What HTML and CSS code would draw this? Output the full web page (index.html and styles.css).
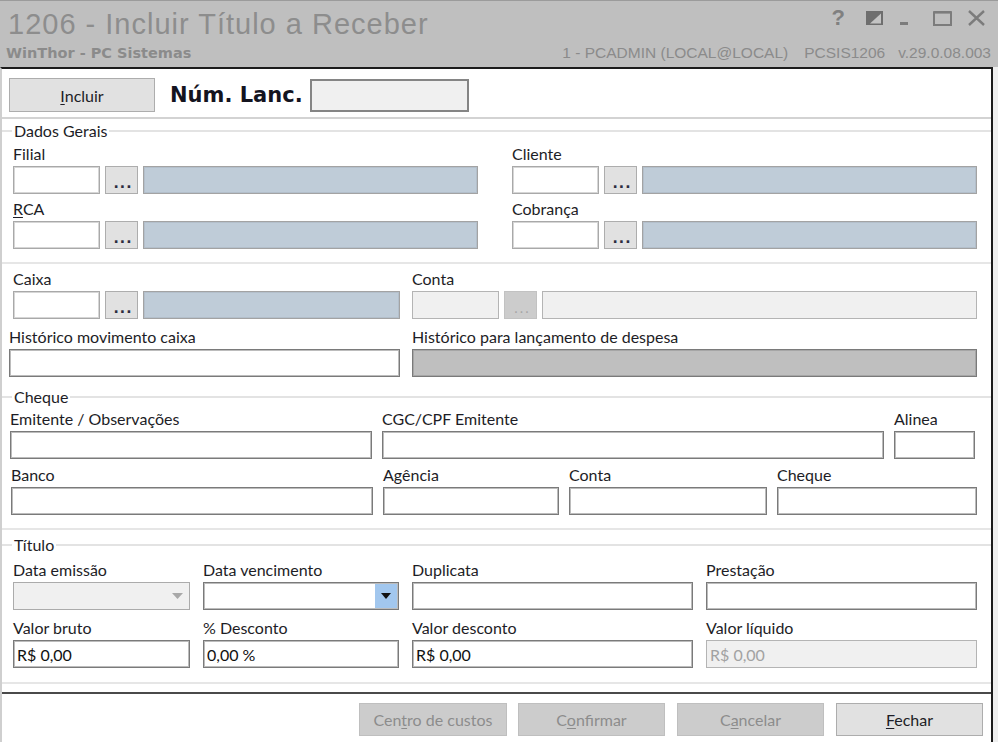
FILE: index.html
```html
<!DOCTYPE html>
<html lang="pt-BR">
<head>
    <meta charset="UTF-8">
    <title>1206 - Incluir Título a Receber</title>
    <link rel="stylesheet" href="styles.css">
</head>
<body>

<div class="window">
    <header class="titlebar">
        <div class="title-row">
            <h1>1206 - Incluir Título a Receber</h1>
            <div class="win-controls">
                <span class="help">?</span>
                <svg class="ctl ctl-theme" width="18" height="15" viewBox="0 0 18 15">
                    <rect x="0" y="0" width="17" height="14" fill="#6e6e6e"/>
                    <polygon points="15,2.5 15,12.5 4,12.5" fill="#c4c4c4"/>
                </svg>
                <svg class="ctl ctl-min" width="10" height="15" viewBox="0 0 10 15">
                    <rect x="1" y="11" width="8" height="3" fill="#7c7c7c"/>
                </svg>
                <svg class="ctl ctl-max" width="19" height="15" viewBox="0 0 19 15">
                    <rect x="1" y="1.2" width="17" height="12.8" fill="none" stroke="#7c7c7c" stroke-width="2"/>
                    <rect x="1" y="0" width="17" height="2.5" fill="#7c7c7c"/>
                </svg>
                <svg class="ctl ctl-close" width="19" height="16" viewBox="0 0 19 16">
                    <path d="M2 1 L17 15 M17 1 L2 15" stroke="#7c7c7c" stroke-width="2.4" fill="none"/>
                </svg>
            </div>
        </div>
        <div class="sub-row">
            <span class="brand">WinThor - PC Sistemas</span>
            <span class="session"><span>1 - PCADMIN (LOCAL@LOCAL)</span><span class="rotina">PCSIS1206</span><span class="versao">v.29.0.08.003</span></span>
        </div>
    </header>

    <div class="frame">
        <div class="toolbar">
            <button class="btn btn-incluir"><u>I</u>ncluir</button>
            <span class="lanc-label">Núm. Lanc.</span>
            <input class="lanc-input" type="text">
        </div>

        <!-- Dados gerais: filial, cliente, RCA, cobrança -->
        <section class="group">
            <div class="group-title title-dados">Dados Gerais</div>
            <div class="grid-dados">
                <div class="field">
                    <label>Filial</label>
                    <div class="lookup">
                        <input class="code" type="text">
                        <button class="dots">...</button>
                        <input class="desc" type="text" readonly>
                    </div>
                </div>
                <div class="field">
                    <label>Cliente</label>
                    <div class="lookup">
                        <input class="code" type="text">
                        <button class="dots">...</button>
                        <input class="desc" type="text" readonly>
                    </div>
                </div>
                <div class="field">
                    <label><u>R</u>CA</label>
                    <div class="lookup">
                        <input class="code" type="text">
                        <button class="dots">...</button>
                        <input class="desc" type="text" readonly>
                    </div>
                </div>
                <div class="field">
                    <label>Cobrança</label>
                    <div class="lookup">
                        <input class="code" type="text">
                        <button class="dots">...</button>
                        <input class="desc" type="text" readonly>
                    </div>
                </div>
            </div>
        </section>

        <!-- Caixa e conta -->
        <section class="group no-sep">
            <div class="grid-caixa">
                <div class="field">
                    <label>Caixa</label>
                    <div class="lookup">
                        <input class="code" type="text">
                        <button class="dots">...</button>
                        <input class="desc" type="text" readonly>
                    </div>
                </div>
                <div class="field">
                    <label>Conta</label>
                    <div class="lookup off">
                        <input class="code" type="text" disabled>
                        <button class="dots" disabled>...</button>
                        <input class="desc" type="text" disabled>
                    </div>
                </div>
                <div class="field wide-left">
                    <label>Histórico movimento caixa</label>
                    <input class="inp" type="text">
                </div>
                <div class="field">
                    <label>Histórico para lançamento de despesa</label>
                    <input class="inp inp-gray" type="text" readonly>
                </div>
            </div>
        </section>

        <!-- Cheque -->
        <section class="group">
            <div class="group-title">Cheque</div>
            <div class="cheque-body">
                <div class="cheque-row1">
                    <div class="field">
                        <label>Emitente / Observações</label>
                        <input class="inp" type="text">
                    </div>
                    <div class="field">
                        <label>CGC/CPF Emitente</label>
                        <input class="inp" type="text">
                    </div>
                    <div class="field">
                        <label>Alinea</label>
                        <input class="inp" type="text">
                    </div>
                </div>
                <div class="cheque-row2">
                    <div class="field">
                        <label>Banco</label>
                        <input class="inp" type="text">
                    </div>
                    <div class="field">
                        <label>Agência</label>
                        <input class="inp" type="text">
                    </div>
                    <div class="field">
                        <label>Conta</label>
                        <input class="inp" type="text">
                    </div>
                    <div class="field">
                        <label>Cheque</label>
                        <input class="inp" type="text">
                    </div>
                </div>
            </div>
        </section>

        <!-- Título -->
        <section class="group">
            <div class="group-title title-titulo">Título</div>
            <div class="grid-titulo">
                <div class="field">
                    <label>Data emissão</label>
                    <div class="combo combo-off">
                        <span class="combo-text"></span>
                        <span class="drop">
                            <svg width="11" height="6" viewBox="0 0 11 6"><polygon points="0,0 11,0 5.5,6" fill="#a8a8a8"/></svg>
                        </span>
                    </div>
                </div>
                <div class="field">
                    <label>Data vencimento</label>
                    <div class="combo">
                        <span class="combo-text"></span>
                        <span class="drop drop-on">
                            <svg width="10" height="6" viewBox="0 0 10 6"><polygon points="0,0 10,0 5,6" fill="#111"/></svg>
                        </span>
                    </div>
                </div>
                <div class="field">
                    <label>Duplicata</label>
                    <input class="inp" type="text">
                </div>
                <div class="field">
                    <label>Prestação</label>
                    <input class="inp" type="text">
                </div>
                <div class="field">
                    <label>Valor bruto</label>
                    <input class="inp" type="text" value="R$ 0,00">
                </div>
                <div class="field">
                    <label>% Desconto</label>
                    <input class="inp" type="text" value="0,00 %">
                </div>
                <div class="field">
                    <label>Valor desconto</label>
                    <input class="inp" type="text" value="R$ 0,00">
                </div>
                <div class="field">
                    <label>Valor líquido</label>
                    <input class="inp inp-off" type="text" value="R$ 0,00" disabled>
                </div>
            </div>
        </section>

        <footer class="footer">
            <button class="btn btn-foot btn-wide" disabled>Cen<u>t</u>ro de custos</button>
            <button class="btn btn-foot" disabled>C<u>o</u>nfirmar</button>
            <button class="btn btn-foot" disabled>C<u>a</u>ncelar</button>
            <button class="btn btn-foot"><u>F</u>echar</button>
        </footer>
    </div>
</div>

</body>
</html>
```

FILE: styles.css
```css
* {
    box-sizing: border-box;
}
body {
    margin: 0;
    background-color: #efefef;
    font-family: Lato, "Noto Sans", sans-serif;
    font-size: 16px;
    color: #1d1d26;
}
.window {
    width: 998px;
    height: 742px;
    overflow: hidden;
    display: flex;
    flex-direction: column;
}

/* title bar */
.titlebar {
    height: 67px;
    flex: none;
    background-color: #bfbfbf;
    border-top: 1px solid #9b9b9b;
    padding: 7px 7px 0 8px;
    color: #8b8b8b;
}
.title-row {
    display: flex;
    justify-content: space-between;
    align-items: flex-start;
}
.title-row h1 {
    margin: 0;
    font: normal 29px/32px "Liberation Sans", Arial, sans-serif;
    letter-spacing: 1px;
    color: #8d8d8d;
}
.win-controls {
    display: flex;
    align-items: flex-start;
    margin: 1px 5px 0 0;
}
.help {
    font: bold 22px/20px "Liberation Sans", Arial, sans-serif;
    color: #808080;
    margin-top: -1px;
}
.ctl {
    display: block;
    margin-top: 2px;
}
.ctl-theme { margin-left: 21px; }
.ctl-min { margin-left: 15px; }
.ctl-max { margin-left: 24px; }
.ctl-close { margin-left: 15px; margin-top: 1px; }

.sub-row {
    display: flex;
    justify-content: space-between;
    align-items: baseline;
    margin-top: 4px;
    line-height: 18px;
}
.brand {
    font: bold 14.5px/18px "DejaVu Sans", sans-serif;
    margin-left: -2px;
}
.session {
    font: 15.5px/18px "Liberation Sans", Arial, sans-serif;
}
.session .rotina { margin-left: 16px; }
.session .versao { margin-left: 13px; }

/* main form frame */
.frame {
    flex: 1;
    width: 993px;
    background-color: #fff;
    border-top: 2px solid #1c1c1c;
    border-right: 2px solid #1c1c1c;
    border-left: 2px solid #cfcfcf;
    display: flex;
    flex-direction: column;
    overflow: hidden;
}
.toolbar {
    height: 50px;
    flex: none;
    display: flex;
    align-items: flex-start;
    padding: 9px 0 0 7px;
    border-bottom: 2px solid #d3d3d3;
}
.btn {
    font-family: Lato, "Noto Sans", sans-serif;
    font-size: 16px;
    color: #1d1d26;
    background-color: #e1e1e1;
    border: 1px solid #adadad;
    padding: 0;
}
.btn u {
    text-underline-offset: 2px;
}
.btn-incluir {
    width: 146px;
    height: 34px;
}
.lanc-label {
    margin-left: 15px;
    font: bold 21px/34px "DejaVu Sans", sans-serif;
    color: #14141f;
}
.lanc-input {
    margin: 1px 0 0 7px;
    width: 159px;
    height: 33px;
    background-color: #f0f0f0;
    border: 2px solid #858585;
}

/* group boxes */
.group {
    flex: none;
    border-bottom: 2px solid #e6e6e6;
}
.group.no-sep {
    border-bottom: none;
}
.group-title {
    display: flex;
    align-items: center;
    height: 20px;
    line-height: 18px;
}
.group-title::before {
    content: "";
    width: 10px;
    border-top: 2px solid #e3e3e3;
    margin-right: 2px;
}
.group-title::after {
    content: "";
    flex: 1;
    border-top: 2px solid #e3e3e3;
    margin-left: 2px;
}
.title-dados { margin-top: 2px; }
.title-titulo { margin-top: 5px; }

.field label {
    display: block;
    height: 17px;
    line-height: 17px;
    margin-bottom: 4px;
    white-space: nowrap;
}
.field label u {
    text-underline-offset: 2px;
}

.inp {
    display: block;
    width: 100%;
    height: 28px;
    margin: 0;
    padding: 0 3px;
    font-family: Lato, "Noto Sans", sans-serif;
    font-size: 16px;
    color: #111;
    background-color: #fff;
    border: 1px solid #7a7a7a;
    box-shadow: inset 0 0 0 1px #bcbcbc;
    outline: none;
}
.inp-gray {
    background-color: #bfbfbf;
    box-shadow: inset 0 0 0 1px #a6a6a6;
}
.inp-off {
    background-color: #f0f0f0;
    border-color: #b4b4b4;
    box-shadow: none;
    color: #a2a2a2;
}

/* code + search button + description */
.lookup {
    display: flex;
    gap: 5px;
    height: 28px;
}
.lookup input {
    height: 28px;
    margin: 0;
    padding: 0 3px;
    outline: none;
}
.lookup .code {
    width: 87px;
    flex: none;
    background-color: #fff;
    border: 1px solid #a9a9a9;
    box-shadow: inset 0 0 0 1px #d6d6d6;
}
.lookup .desc {
    flex: 1;
    min-width: 0;
    background-color: #bfccd8;
    border: 1px solid #a3a3a3;
    box-shadow: inset 0 0 0 1px #b3bfcb;
}
.dots {
    width: 33px;
    flex: none;
    height: 28px;
    padding: 5px 0 0 3px;
    background-color: #e1e1e1;
    border: 1px solid #adadad;
    font: bold 14px/1 "DejaVu Sans", sans-serif;
    color: #2c2c40;
    letter-spacing: 1px;
}
.lookup.off .code {
    background-color: #f0f0f0;
    border-color: #b4b4b4;
    box-shadow: none;
}
.lookup.off .dots {
    background-color: #cccccc;
    border-color: #c2c2c2;
    color: #a6a6a6;
    font-weight: normal;
}
.lookup.off .desc {
    background-color: #f0f0f0;
    border-color: #b4b4b4;
    box-shadow: none;
}

.grid-dados {
    display: grid;
    grid-template-columns: 1fr 1fr;
    column-gap: 34px;
    row-gap: 6px;
    padding: 4px 14px 13px 11px;
}
.grid-caixa {
    display: grid;
    grid-template-columns: 387px 1fr;
    column-gap: 12px;
    row-gap: 9px;
    padding: 6px 14px 10px 11px;
}
.wide-left {
    margin-left: -4px;
}
.cheque-body {
    display: flex;
    flex-direction: column;
    gap: 7px;
    padding: 3px 0 13px;
}
.cheque-row1 {
    display: grid;
    grid-template-columns: 362px 502px 81px;
    column-gap: 10px;
    padding-left: 8px;
}
.cheque-row2 {
    display: grid;
    grid-template-columns: 362px 176px 198px 200px;
    column-gap: 10px;
    padding-left: 9px;
}
.grid-titulo {
    display: grid;
    grid-template-columns: 177px 196px 281px 1fr;
    column-gap: 13px;
    row-gap: 9px;
    padding: 6px 14px 14px 11px;
}

/* date combos */
.combo {
    display: flex;
    height: 28px;
    background-color: #fff;
    border: 1px solid #7a7a7a;
    box-shadow: inset 0 0 0 1px #bcbcbc;
    padding: 1px;
}
.combo-text {
    flex: 1;
}
.drop {
    width: 22px;
    display: flex;
    align-items: center;
    justify-content: center;
}
.drop svg {
    display: block;
}
.drop-on {
    background-color: #a2c7ee;
}
.combo-off {
    background-color: #f0f0f0;
    border-color: #ababab;
    box-shadow: none;
}

/* bottom buttons */
.footer {
    flex: 1;
    margin: 8px 0 0 -2px;
    border-top: 2px solid #4a4a4a;
    border-left: 2px solid #4a4a4a;
    display: flex;
    justify-content: flex-end;
    align-items: flex-start;
    gap: 12px;
    padding: 9px 8px 0 0;
}
.btn-foot {
    width: 147px;
    height: 33px;
}
.btn-wide {
    width: 148px;
    margin-right: -1px;
}
.btn-foot:disabled {
    background-color: #cccccc;
    border-color: #bfbfbf;
    color: #8c8c8c;
}
```
